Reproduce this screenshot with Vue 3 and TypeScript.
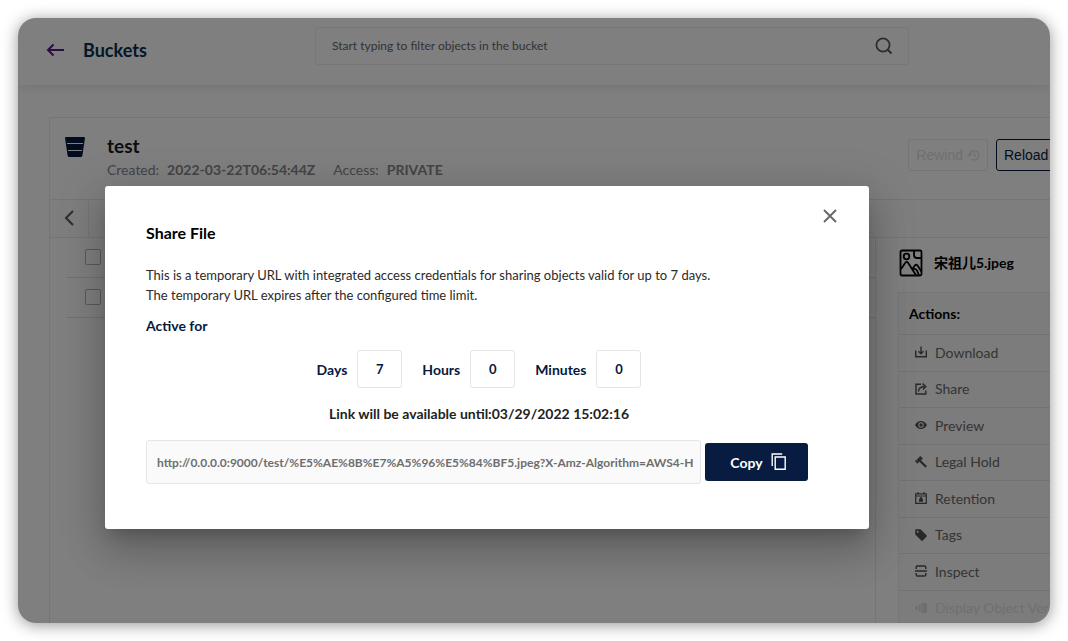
<script setup lang="ts">
import { ref } from 'vue'

interface Duration {
  id: string
  label: string
  value: string
}

interface Action {
  icon: string
  label: string
  disabled?: boolean
}

const durations = ref<Duration[]>([
  { id: 'days', label: 'Days', value: '7' },
  { id: 'hours', label: 'Hours', value: '0' },
  { id: 'minutes', label: 'Minutes', value: '0' },
])

const actions: Action[] = [
  { icon: 'download', label: 'Download' },
  { icon: 'share', label: 'Share' },
  { icon: 'preview', label: 'Preview' },
  { icon: 'hold', label: 'Legal Hold' },
  { icon: 'retention', label: 'Retention' },
  { icon: 'tags', label: 'Tags' },
  { icon: 'inspect', label: 'Inspect' },
  { icon: 'versions', label: 'Display Object Versions', disabled: true },
]

const filter = ref('')
const rows = ref([false, false])
const url = ref('http://0.0.0.0:9000/test/%E5%AE%8B%E7%A5%96%E5%84%BF5.jpeg?X-Amz-Algorithm=AWS4-H')
</script>

<template>
  <div class="window">
    <header class="topbar">
      <a class="back" href="#" aria-label="Back">
        <svg width="19" height="14" viewBox="0 0 19 14" fill="none" stroke="currentColor" stroke-width="2">
          <path d="M18 7H2M7.500 1.500L2 7l5.500 5.500" />
        </svg>
      </a>
      <h1>Buckets</h1>
      <label class="search">
        <input v-model="filter" type="text" placeholder="Start typing to filter objects in the bucket" aria-label="Filter objects" />
        <svg width="18" height="18" viewBox="0 0 18 18" fill="none" stroke="currentColor" stroke-width="1.800">
          <circle cx="8" cy="8" r="6.600" />
          <path d="M12.500 12.500l4 4" stroke-width="2.200" />
        </svg>
      </label>
    </header>

    <main class="browser">
      <section class="bucket">
        <svg class="bucket-icon" width="20" height="20" viewBox="0 0 20 20">
          <path fill="currentColor" d="M1 0h18q1 0 1 1l-2.600 17.500Q17.200 20 16 20H4q-1.200 0-1.400-1.500L0 1q0-1 1-1z" />
          <path fill="none" stroke="#fff" d="M2 6.500h16M3 13.500h14" />
        </svg>
        <div class="bucket-info">
          <h2>test</h2>
          <p>
            <span>Created:</span><strong>2022-03-22T06:54:44Z</strong>
            <span class="access">Access:</span><strong>PRIVATE</strong>
          </p>
        </div>
        <div class="bucket-buttons">
          <button type="button" disabled>
            Rewind
            <svg width="13" height="12" viewBox="0 0 13 12" fill="none" stroke="currentColor" stroke-width="1.300">
              <path d="M2.500 6.500A4.700 4.700 0 1 1 5 10.400M.5 4.500l2 2.500 2.200-2.300M7.200 3.200v3l2 1.400" />
            </svg>
          </button>
          <button type="button" class="reload">Reload</button>
        </div>
      </section>

      <nav class="crumbs">
        <button type="button" aria-label="Up one level">
          <svg width="10" height="16" viewBox="0 0 10 16" fill="none" stroke="currentColor" stroke-width="2">
            <path d="M9 1L2 8l7 7" />
          </svg>
        </button>
      </nav>

      <div class="content">
        <ul class="objects">
          <li v-for="(_, i) in rows" :key="i">
            <input v-model="rows[i]" type="checkbox" :aria-label="`Select object ${i + 1}`" />
          </li>
        </ul>

        <aside class="details">
          <h3>
            <svg width="24" height="28" viewBox="0 0 24 28" fill="none" stroke="currentColor" stroke-width="1.800">
              <rect x="1.500" y="1.500" width="21" height="25" rx="1.500" />
              <circle cx="7.500" cy="7.500" r="2.800" />
              <path d="M15 2v4q0 3 3 3h4.500M2 20l4.500-6.500q1.200-1.300 2.400 0l8.300 13M13.500 20l2.500-3.700q1.200-1.300 2.400 0l4 6.200M13.500 20q3-.8 4.500 1.500l2 5" />
            </svg>
            <span>宋祖儿5.jpeg</span>
          </h3>
          <div class="actions">
            <h4>Actions:</h4>
            <ul>
              <li v-for="a in actions" :key="a.label">
                <button type="button" :disabled="a.disabled">
                  <svg width="12" height="12" viewBox="0 0 12 12" fill="none" stroke="currentColor" stroke-width="1.400">
                    <path v-if="a.icon === 'download'" d="M.7 4.500v6.300h10.600V4.500M6 .5v7M3.500 5.300L6 7.800l2.500-2.500" />
                    <path v-else-if="a.icon === 'share'" d="M6 1.200H1v9.800h9.800V7.500M3.500 8.500Q3.500 4 9.500 3.500M7.500.6L10.800 3.500 8 6.500" />
                    <template v-else-if="a.icon === 'preview'">
                      <path fill="currentColor" stroke="none" fill-rule="evenodd" d="M0 6q2.300-4 6-4t6 4q-2.300 4-6 4T0 6zm6-2.700a2.700 2.700 0 1 0 0 5.400 2.700 2.700 0 0 0 0-5.400z" />
                      <circle cx="6" cy="6" r="1.700" fill="currentColor" stroke="none" />
                    </template>
                    <template v-else-if="a.icon === 'hold'">
                      <path d="M2.300 5.400L5.600 2.100" stroke-width="3.200" />
                      <path d="M.4 4.600l2.700 2.700M4.700.4l2.700 2.700" stroke-width="1.500" />
                      <path d="M4.500 4.300l6 6" stroke-width="2.200" stroke-linecap="round" />
                    </template>
                    <template v-else-if="a.icon === 'retention'">
                      <path d="M.7 1.800h10.600v9.500H.7zM.7 4h10.600M3 0v2.500M9 0v2.500" stroke-width="1.200" />
                      <path fill="currentColor" stroke="none" d="M4 7h.6q0-1.900 1.400-1.900T7.400 7H8v2.700H4z" />
                    </template>
                    <path v-else-if="a.icon === 'tags'" fill="currentColor" stroke="none" fill-rule="evenodd" d="M.2 1Q.2.200 1 .2h4.500L11.700 6.500q.5.500 0 1L7.500 11.700q-.5.500-1 0L.2 5.500zM2.700 1.700a1 1 0 1 0 0 2 1 1 0 0 0 0-2z" />
                    <path v-else-if="a.icon === 'inspect'" d="M1.200 4V2.200Q1.200 1 2.400 1h7.200q1.200 0 1.200 1.200V4M0 6h12M1.200 8v1.800Q1.200 11 2.400 11h7.200q1.200 0 1.200-1.200V8" />
                    <path v-else fill="currentColor" stroke="none" d="M12 1v10H6.500V1zM5.800 2.500v7H3.300v-7zM2.600 4v4H0V4z" />
                  </svg>
                  {{ a.label }}
                </button>
              </li>
            </ul>
          </div>
        </aside>
      </div>
    </main>

    <div class="overlay">
      <div class="dialog" role="dialog" aria-modal="true" aria-labelledby="share-title">
        <button class="close" type="button" aria-label="Close">
          <svg width="14" height="14" viewBox="0 0 14 14" fill="none" stroke="currentColor" stroke-width="2">
            <path d="M1 1l12 12M13 1L1 13" />
          </svg>
        </button>
        <h2 id="share-title">Share File</h2>
        <p class="about">
          This is a temporary URL with integrated access credentials for sharing objects valid for up to 7 days.<br />
          The temporary URL expires after the configured time limit.
        </p>
        <h3>Active for</h3>
        <div class="durations">
          <template v-for="d in durations" :key="d.id">
            <label :for="d.id">{{ d.label }}</label>
            <input :id="d.id" v-model="d.value" type="text" inputmode="numeric" />
          </template>
        </div>
        <p class="until">Link will be available until:03/29/2022 15:02:16</p>
        <div class="link">
          <input v-model="url" type="text" readonly aria-label="Share URL" />
          <button type="button">
            Copy
            <svg width="16" height="18" viewBox="0 0 16 18" fill="none" stroke="currentColor" stroke-width="1.400">
              <path d="M1.200 13V1h10M4.200 4h10v12.300h-10z" />
            </svg>
          </button>
        </div>
      </div>
    </div>
  </div>
</template>

<style>
body {
  margin: 0;
  background: #fff;
}
</style>

<style scoped>
* {
  box-sizing: border-box;
}

h1, h2, h3, h4, p, ul {
  margin: 0;
  padding: 0;
}

ul {
  list-style: none;
}

button, input {
  font: inherit;
  color: inherit;
}

.window {
  position: relative;
  display: flex;
  flex-direction: column;
  min-height: calc(100vh - 36px);
  margin: 18px;
  overflow: hidden;
  border-radius: 18px;
  background: #fff;
  box-shadow: 0 2px 16px rgba(0, 0, 0, 0.42);
  font-family: Lato, "Noto Sans CJK SC", sans-serif;
  font-size: 14px;
}

.topbar {
  display: flex;
  align-items: center;
  height: 67px;
  padding: 0 141px 4px 28px;
  box-shadow: 0 2px 10px rgba(0, 0, 0, 0.1);
}

.back {
  display: flex;
  color: #551a8b;
}

.topbar h1 {
  width: 232px;
  margin-left: 18px;
  color: #073052;
  font-size: 18px;
  line-height: 24px;
}

.search {
  display: flex;
  flex: 1;
  align-items: center;
  height: 38px;
  margin-bottom: 7px;
  padding: 0 15px 0 16px;
  border: 1px solid #eee;
  border-radius: 3px;
  color: #5a5a5a;
}

.search input {
  flex: 1;
  min-width: 0;
  padding: 0 0 2px;
  border: 0;
  outline: 0;
  background: none;
  font-size: 12px;
}

.search input::placeholder {
  color: #666;
  opacity: 1;
}

.browser {
  display: flex;
  flex: 1;
  flex-direction: column;
  margin: 32px 0 0 31px;
  border: solid #ebebeb;
  border-width: 1px 0 0 1px;
}

.bucket {
  display: flex;
  height: 81px;
  padding: 16px 0 0 15px;
}

.bucket-icon {
  flex: none;
  margin-top: 3px;
  color: #07193e;
}

.bucket-info {
  flex: 1;
  margin-left: 22px;
}

.bucket-info h2 {
  color: #1a1a1a;
  font-size: 19px;
  line-height: 24px;
}

.bucket-info p {
  display: flex;
  gap: 8px;
  color: #87888d;
  line-height: 24px;
}

.bucket-info .access {
  margin-left: 10px;
}

.bucket-buttons {
  display: flex;
  gap: 8px;
  margin: 5px -28px 0 0;
}

.bucket-buttons button {
  display: flex;
  align-items: center;
  gap: 4px;
  height: 32px;
  padding: 0 7px;
  border: 1px solid #07193e;
  border-radius: 3px;
  background: none;
  color: #07193e;
  font-family: "Liberation Sans", Arial, sans-serif;
}

.bucket-buttons button:disabled {
  border-color: #eaeaea;
  color: #e0e0e0;
}

.bucket-buttons .reload {
  width: 82px;
}

.crumbs {
  height: 39px;
  border: solid #eaeaea;
  border-width: 1px 0;
  background: #fdfdfd;
}

.crumbs button {
  display: grid;
  place-items: center;
  width: 39px;
  height: 37px;
  padding: 0 0 2px;
  border: 0;
  border-right: 1px solid #eaeaea;
  background: none;
  color: #5a5a5a;
}

.content {
  display: flex;
  flex: 1;
}

.objects {
  flex: 1;
  padding-left: 16px;
}

.objects li {
  display: flex;
  align-items: center;
  height: 40px;
  padding: 0 0 2px 19px;
  border-bottom: 1px solid #e4e4e4;
}

.objects input {
  width: 16px;
  height: 16px;
  margin: 0;
  border: 1px solid #b4b4b4;
  border-radius: 2px;
  appearance: none;
}

.details {
  display: flex;
  flex-direction: column;
  width: 175px;
  padding-left: 22px;
  border-left: 1px solid #eaeaea;
}

.details h3 {
  display: flex;
  align-items: center;
  gap: 11px;
  height: 54px;
  padding: 0 0 4px 1px;
  font-size: 14px;
  line-height: 20px;
}

.actions {
  display: flex;
  flex: 1;
  flex-direction: column;
  margin-bottom: -3px;
  border: solid #ececec;
  border-width: 1px 0 0 1px;
  background: #f8f8f8;
}

.actions h4 {
  height: 41px;
  padding-left: 10px;
  font-size: 14px;
  line-height: 41px;
}

.actions ul {
  display: flex;
  flex: 1;
  flex-direction: column;
}

.actions li {
  flex: 1;
  min-height: 36px;
  border-top: 1px solid #e4e4e4;
}

.actions button {
  display: flex;
  align-items: center;
  gap: 8px;
  width: 100%;
  height: 100%;
  padding: 0 0 1px 16px;
  border: 0;
  background: none;
  color: #6a6a6a;
  white-space: nowrap;
}

.actions button svg {
  flex: none;
}

.actions button:enabled svg {
  color: #505050;
}

.actions button:disabled {
  color: #dfdfdf;
}

.overlay {
  position: absolute;
  inset: 0;
  display: flex;
  align-items: flex-start;
  padding: 168px 181px 0 87px;
  background: rgba(0, 0, 0, 0.5);
}

.dialog {
  position: relative;
  flex: 1;
  min-width: 0;
  padding: 35px 61px 45px 41px;
  border-radius: 3px;
  background: #fff;
  box-shadow: 0 11px 15px -7px rgba(0, 0, 0, 0.2), 0 24px 38px 3px rgba(0, 0, 0, 0.14),
    0 9px 46px 8px rgba(0, 0, 0, 0.12);
}

.close {
  position: absolute;
  top: 23px;
  right: 32px;
  display: flex;
  padding: 0;
  border: 0;
  background: none;
  color: #6a6a6a;
}

.dialog h2 {
  color: #000;
  font-size: 16px;
  line-height: 24px;
}

.about {
  margin-top: 20px;
  color: #2a2a2a;
  font-size: 13px;
  line-height: 20px;
}

.dialog h3 {
  margin-top: 11px;
  color: #07193e;
  font-size: 14px;
  line-height: 20px;
}

.durations {
  display: flex;
  align-items: center;
  justify-content: center;
  margin-top: 14px;
  padding-left: 4px;
  color: #07193e;
  font-weight: 700;
}

.durations input {
  width: 45px;
  height: 38px;
  margin: 0 20px 0 10px;
  padding: 0;
  border: 1px solid #e5e5e5;
  border-radius: 3px;
  background: #fff;
  font-size: 13px;
  text-align: center;
}

.durations input:last-child {
  margin-right: 0;
}

.until {
  margin: 16px 0;
  padding-left: 4px;
  color: #222;
  font-weight: 700;
  line-height: 20px;
  text-align: center;
}

.link {
  display: flex;
  align-items: center;
  gap: 4px;
}

.link input {
  flex: 1;
  min-width: 0;
  height: 44px;
  padding: 0 4px 0 10px;
  border: 1px solid #e5e5e5;
  border-radius: 3px;
  background: #fafafa;
  color: #6e6e6e;
  font-size: 12px;
  font-weight: 700;
}

.link button {
  display: flex;
  align-items: center;
  justify-content: center;
  gap: 8px;
  width: 103px;
  height: 38px;
  padding: 0 0 0 4px;
  border: 0;
  border-radius: 3px;
  background: #081c42;
  color: #fff;
  font-weight: 700;
}
</style>
